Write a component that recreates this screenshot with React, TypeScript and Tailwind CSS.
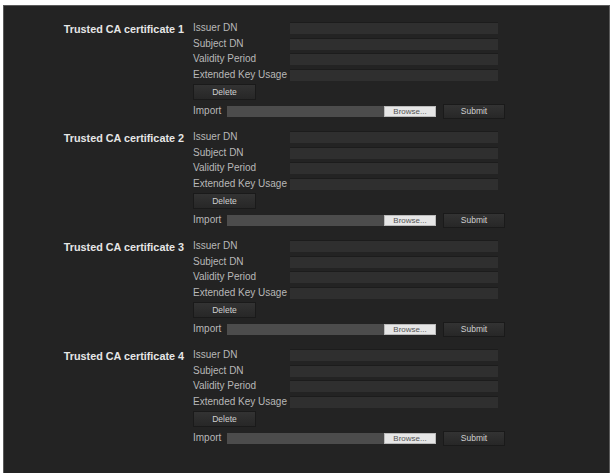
const fields = ["Issuer DN", "Subject DN", "Validity Period", "Extended Key Usage"]

const Certificate = ({ n }: { n: number }) => (
  <div className="flex">
    <div className="w-[181px] shrink-0 pr-[9px] text-right text-[10.8px] leading-[12px] font-bold text-[#e6e6e6] pt-[1px] whitespace-nowrap">
      Trusted CA certificate {n}
    </div>
    <div className="flex flex-col">
      {fields.map((f) => (
        <div key={f} className="flex h-[15.5px]">
          <div className="w-[97px] text-[10px] leading-[12px] text-[#b8b8b8]">{f}</div>
          <div className="w-[208px] h-[12px] bg-[#2f2f2f] border-t border-[#1c1c1c]" />
        </div>
      ))}
      <button className="w-[63px] h-[16px] bg-gradient-to-b from-[#333] to-[#272727] border border-[#1a1a1a] text-[8.5px] leading-[14px] text-[#d0d0d0]">
        Delete
      </button>
      <div className="flex items-center mt-[5px] h-[12px]">
        <div className="w-[34px] text-[10px] leading-[12px] text-[#b8b8b8]">Import</div>
        <div className="w-[157px] h-[11px] bg-[#4c4c4c]" />
        <div className="w-[52px] h-[11px] bg-[#e6e6e6] border border-[#bbb] text-[8px] leading-[9px] text-[#555] text-center">
          Browse...
        </div>
        <button className="ml-[7px] w-[62px] h-[15px] bg-gradient-to-b from-[#333] to-[#272727] border border-[#1a1a1a] text-[8.5px] leading-[13px] text-[#d0d0d0]">
          Submit
        </button>
      </div>
    </div>
  </div>
)

export default function App() {
  return (
    <div className="w-[612px] h-[473px] bg-white pt-[5px] pl-[3px] pr-[2px] font-['Liberation_Sans',Arial,sans-serif]">
      <div className="h-full bg-[#232323] border-l border-t border-r border-[#5a5a5a] pt-[16px] pl-[8px] flex flex-col gap-[14px]">
        {[1, 2, 3, 4].map((n) => (
          <Certificate key={n} n={n} />
        ))}
      </div>
    </div>
  )
}
